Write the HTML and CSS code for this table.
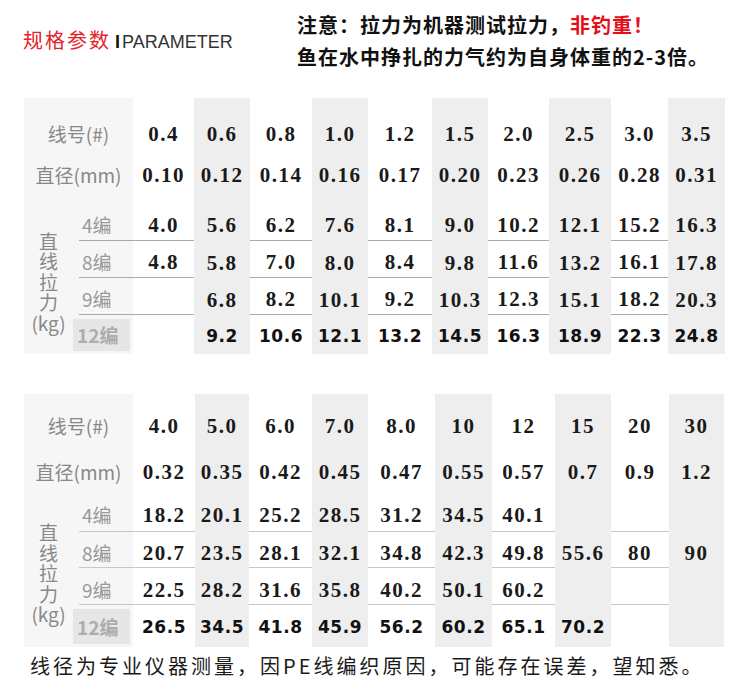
FILE: index.html
```html
<!DOCTYPE html>
<html lang="zh-CN">
<head>
<meta charset="utf-8">
<title>规格参数</title>
<link rel="stylesheet" href="styles.css">
</head>
<body>
<div class="header">
  <div class="title"><span class="cn">规格参数</span> <span class="en"><span class="bar">I</span>PARAMETER</span></div>
  <div class="note">
    <div>注意：拉力为机器测试拉力，<span class="red">非钓重！</span></div>
    <div>鱼在水中挣扎的力气约为自身体重的2-3倍。</div>
  </div>
</div>

<div class="tbl t1">
  <div class="row r1">
    <div class="lab">线号(#)</div>
    <div class="c">0.4</div><div class="c g">0.6</div><div class="c">0.8</div><div class="c g">1.0</div><div class="c">1.2</div><div class="c g">1.5</div><div class="c">2.0</div><div class="c g">2.5</div><div class="c">3.0</div><div class="c g">3.5</div>
  </div>
  <div class="row r2">
    <div class="lab">直径(mm)</div>
    <div class="c">0.10</div><div class="c g">0.12</div><div class="c">0.14</div><div class="c g">0.16</div><div class="c">0.17</div><div class="c g">0.20</div><div class="c">0.23</div><div class="c g">0.26</div><div class="c">0.28</div><div class="c g">0.31</div>
  </div>
  <div class="row r3">
    <div class="vert"><div>直</div><div>线</div><div>拉</div><div>力</div><div>(kg)</div></div>
    <div class="sub"><span>4编</span></div>
    <div class="c">4.0</div><div class="c g">5.6</div><div class="c">6.2</div><div class="c g">7.6</div><div class="c">8.1</div><div class="c g">9.0</div><div class="c">10.2</div><div class="c g">12.1</div><div class="c">15.2</div><div class="c g">16.3</div>
  </div>
  <div class="row r4">
    <div class="sub"><span>8编</span></div>
    <div class="c">4.8</div><div class="c g">5.8</div><div class="c">7.0</div><div class="c g">8.0</div><div class="c">8.4</div><div class="c g">9.8</div><div class="c">11.6</div><div class="c g">13.2</div><div class="c">16.1</div><div class="c g">17.8</div>
  </div>
  <div class="row r5">
    <div class="sub"><span>9编</span></div>
    <div class="c"></div><div class="c g">6.8</div><div class="c">8.2</div><div class="c g">10.1</div><div class="c">9.2</div><div class="c g">10.3</div><div class="c">12.3</div><div class="c g">15.1</div><div class="c">18.2</div><div class="c g">20.3</div>
  </div>
  <div class="row r6">
    <div class="sub"><span>12编</span></div>
    <div class="c"></div><div class="c g">9.2</div><div class="c">10.6</div><div class="c g">12.1</div><div class="c">13.2</div><div class="c g">14.5</div><div class="c">16.3</div><div class="c g">18.9</div><div class="c">22.3</div><div class="c g">24.8</div>
  </div>
</div>

<div class="tbl t2">
  <div class="row r1">
    <div class="lab">线号(#)</div>
    <div class="c">4.0</div><div class="c g">5.0</div><div class="c">6.0</div><div class="c g">7.0</div><div class="c">8.0</div><div class="c g">10</div><div class="c">12</div><div class="c g">15</div><div class="c">20</div><div class="c g">30</div>
  </div>
  <div class="row r2">
    <div class="lab">直径(mm)</div>
    <div class="c">0.32</div><div class="c g">0.35</div><div class="c">0.42</div><div class="c g">0.45</div><div class="c">0.47</div><div class="c g">0.55</div><div class="c">0.57</div><div class="c g">0.7</div><div class="c">0.9</div><div class="c g">1.2</div>
  </div>
  <div class="row r3">
    <div class="vert"><div>直</div><div>线</div><div>拉</div><div>力</div><div>(kg)</div></div>
    <div class="sub"><span>4编</span></div>
    <div class="c">18.2</div><div class="c g">20.1</div><div class="c">25.2</div><div class="c g">28.5</div><div class="c">31.2</div><div class="c g">34.5</div><div class="c">40.1</div><div class="c g"></div><div class="c"></div><div class="c g"></div>
  </div>
  <div class="row r4">
    <div class="sub"><span>8编</span></div>
    <div class="c">20.7</div><div class="c g">23.5</div><div class="c">28.1</div><div class="c g">32.1</div><div class="c">34.8</div><div class="c g">42.3</div><div class="c">49.8</div><div class="c g">55.6</div><div class="c">80</div><div class="c g">90</div>
  </div>
  <div class="row r5">
    <div class="sub"><span>9编</span></div>
    <div class="c">22.5</div><div class="c g">28.2</div><div class="c">31.6</div><div class="c g">35.8</div><div class="c">40.2</div><div class="c g">50.1</div><div class="c">60.2</div><div class="c g"></div><div class="c"></div><div class="c g"></div>
  </div>
  <div class="row r6">
    <div class="sub"><span>12编</span></div>
    <div class="c">26.5</div><div class="c g">34.5</div><div class="c">41.8</div><div class="c g">45.9</div><div class="c">56.2</div><div class="c g">60.2</div><div class="c">65.1</div><div class="c g">70.2</div><div class="c"></div><div class="c g"></div>
  </div>
</div>

<div class="foot">线径为专业仪器测量，因PE线编织原因，可能存在误差，望知悉。</div>
</body>
</html>
```
FILE: styles.css
```css
* { box-sizing: border-box; }
body {
  margin: 0;
  background: #fff;
  width: 750px;
  height: 686px;
  overflow: hidden;
}
.header {
  display: flex;
  height: 98px;
}
.title {
  width: 297px;
  padding: 28px 0 0 23px;
  line-height: 24px;
  white-space: nowrap;
}
.title .cn {
  font-family: "Noto Sans CJK SC", sans-serif;
  font-size: 20px;
  letter-spacing: 2px;
  color: #e4222a;
}
.title .en {
  font-family: "Liberation Sans", sans-serif;
  font-size: 18px;
  color: #333;
}
.title .bar {
  font-weight: bold;
  color: #111;
  margin-right: 2px;
}
.note {
  padding-top: 9px;
  font-family: "Noto Sans CJK SC", sans-serif;
  font-weight: bold;
  font-size: 20px;
  line-height: 32px;
  letter-spacing: 1px;
  color: #111;
  white-space: nowrap;
}
.note .red { color: #e50f1a; }

.tbl {
  display: grid;
  margin-left: 24px;
  width: 701px;
}
.t1 {
  grid-template-columns: 49px 60px 61px 56px 62px 56px 64px 56px 61px 62px 57px 57px;
  grid-template-rows: 56px 42px 45px 37px 37px 39px;
}
.t2 {
  margin-top: 40px;
  grid-template-columns: 49px 60px 62px 54px 63px 56px 67px 57px 63px 56px 58px 55px;
  grid-template-rows: 55px 45px 38px 36px 37px 42px;
}
.row { display: contents; }

.c {
  display: flex;
  align-items: center;
  justify-content: center;
  font-family: "Liberation Serif", serif;
  font-weight: bold;
  font-size: 21px;
  line-height: 20px;
  letter-spacing: 1.5px;
  color: #1a1a1a;
}
.g { background: #eeeeee; }
.r3 .c:not(.g), .r4 .c:not(.g), .r5 .c:not(.g) { border-bottom: 1px solid #aaa; }
.t2 .r3 .c:not(.g), .t2 .r4 .c:not(.g), .t2 .r5 .c:not(.g) { border-bottom-color: #c8c8c8; }
.r6 .c {
  font-family: "DejaVu Sans", sans-serif;
  font-size: 17px;
  letter-spacing: 0.5px;
  color: #111;
}

.lab {
  grid-column: span 2;
  background: #f6f6f6;
  display: flex;
  align-items: center;
  justify-content: center;
  font-family: "Noto Sans CJK SC", sans-serif;
  font-size: 19px;
  line-height: 20px;
  color: #888;
}
.vert {
  grid-row: span 4;
  background: #f6f6f6;
  display: flex;
  flex-direction: column;
  align-items: center;
  justify-content: center;
  font-family: "Noto Sans CJK SC", sans-serif;
  font-size: 19px;
  color: #888;
}
.vert div {
  height: 20.5px;
  line-height: 20.5px;
}
.sub {
  background: #f6f6f6;
  padding-left: 6px;
  display: flex;
}
.sub span {
  flex: 1;
  display: flex;
  align-items: center;
  padding-left: 3px;
  border-bottom: 1px solid #aaa;
  font-family: "Noto Sans CJK SC", sans-serif;
  font-size: 19px;
  line-height: 20px;
  color: #999;
}
.t2 .sub span { border-bottom-color: #c8c8c8; }
.r6 .sub { padding-left: 0; }
.r6 .sub span {
  border-bottom: 0;
  background: #e6e6e6;
  margin: 4px 3px 3px 0;
  padding-left: 4px;
  font-weight: bold;
  color: #adadad;
}

/* vertical text offsets per row */
.t1 .r1 > * { padding-top: 15px; }
.t1 .r3 .c, .t1 .r3 .sub span { padding-top: 13px; }
.t1 .r4 .c, .t1 .r4 .sub span { padding-top: 6px; }
.t1 .r5 .c, .t1 .r5 .sub span { padding-top: 6px; }
.t1 .r6 .c { padding-top: 3px; }
.t1 .vert { padding-top: 14px; }

.t2 .r1 > * { padding-top: 8px; }
.t2 .r2 > * { padding-top: 1px; }
.t2 .r3 .c, .t2 .r3 .sub span { padding-top: 4px; }
.t2 .r4 .c, .t2 .r4 .sub span { padding-top: 6px; }
.t2 .r5 .c, .t2 .r5 .sub span { padding-top: 7px; }
.t2 .r6 .c { padding-top: 2px; }
.t2 .vert { padding-top: 6px; }

.foot {
  margin-top: 5px;
  padding-left: 30px;
  font-family: "Noto Sans CJK SC", sans-serif;
  font-size: 20px;
  line-height: 28px;
  letter-spacing: 3px;
  color: #1a1a1a;
  white-space: nowrap;
}
```
